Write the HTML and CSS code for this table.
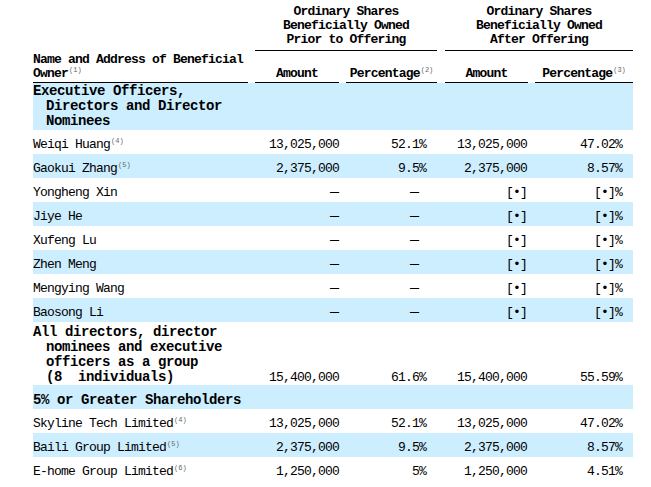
FILE: index.html
```html
<!DOCTYPE html>
<html>
<head>
<meta charset="utf-8">
<link rel="stylesheet" href="styles.css">
</head>
<body>
<div class="wrap">
<table class="own">
<colgroup>
<col class="c1"><col class="c2"><col class="c3"><col class="c4"><col class="c5">
</colgroup>
<thead>
<tr class="hr1">
<th></th>
<th colspan="2" class="pl7"><div class="ul u1">Ordinary Shares<br>Beneficially Owned<br>Prior to Offering</div></th>
<th colspan="2" class="pl8"><div class="ul u1">Ordinary Shares<br>Beneficially Owned<br>After Offering</div></th>
</tr>
<tr class="hr2">
<th class="left"><div class="ul u2">Name and Address of Beneficial Owner<sup>(1)</sup></div></th>
<th class="pl7"><div class="ul u2">Amount</div></th>
<th class="pl7"><div class="ul u2">Percentage<sup>(2)</sup></div></th>
<th class="pl8"><div class="ul u2">Amount</div></th>
<th class="pl7"><div class="ul u2">Percentage<sup>(3)</sup></div></th>
</tr>
</thead>
<tbody>
<tr class="sec b"><td class="hang">Executive Officers, Directors and Director Nominees</td><td></td><td></td><td></td><td></td></tr>
<tr class="row"><td>Weiqi Huang<sup>(4)</sup></td><td class="amt">13,025,000</td><td class="pct">52.1%</td><td class="amt2">13,025,000</td><td class="pct">47.02%</td></tr>
<tr class="row b"><td>Gaokui Zhang<sup>(5)</sup></td><td class="amt">2,375,000</td><td class="pct">9.5%</td><td class="amt2">2,375,000</td><td class="pct">8.57%</td></tr>
<tr class="row"><td>Yongheng Xin</td><td class="amt"><span class="dash">—</span></td><td class="pct dpct"><span class="dash">—</span></td><td class="amt2">[•]</td><td class="pct">[•]%</td></tr>
<tr class="row b"><td>Jiye He</td><td class="amt"><span class="dash">—</span></td><td class="pct dpct"><span class="dash">—</span></td><td class="amt2">[•]</td><td class="pct">[•]%</td></tr>
<tr class="row"><td>Xufeng Lu</td><td class="amt"><span class="dash">—</span></td><td class="pct dpct"><span class="dash">—</span></td><td class="amt2">[•]</td><td class="pct">[•]%</td></tr>
<tr class="row b"><td>Zhen Meng</td><td class="amt"><span class="dash">—</span></td><td class="pct dpct"><span class="dash">—</span></td><td class="amt2">[•]</td><td class="pct">[•]%</td></tr>
<tr class="row"><td>Mengying Wang</td><td class="amt"><span class="dash">—</span></td><td class="pct dpct"><span class="dash">—</span></td><td class="amt2">[•]</td><td class="pct">[•]%</td></tr>
<tr class="row b"><td>Baosong Li</td><td class="amt"><span class="dash">—</span></td><td class="pct dpct"><span class="dash">—</span></td><td class="amt2">[•]</td><td class="pct">[•]%</td></tr>
<tr class="grp"><td class="hang">All directors, director nominees and executive officers as a group (8&nbsp;&nbsp;individuals)</td><td class="amt">15,400,000</td><td class="pct">61.6%</td><td class="amt2">15,400,000</td><td class="pct">55.59%</td></tr>
<tr class="row sec1 b"><td>5% or Greater Shareholders</td><td></td><td></td><td></td><td></td></tr>
<tr class="row"><td>Skyline Tech Limited<sup>(4)</sup></td><td class="amt">13,025,000</td><td class="pct">52.1%</td><td class="amt2">13,025,000</td><td class="pct">47.02%</td></tr>
<tr class="row b"><td>Baili Group Limited<sup>(5)</sup></td><td class="amt">2,375,000</td><td class="pct">9.5%</td><td class="amt2">2,375,000</td><td class="pct">8.57%</td></tr>
<tr class="row"><td>E-home Group Limited<sup>(6)</sup></td><td class="amt">1,250,000</td><td class="pct">5%</td><td class="amt2">1,250,000</td><td class="pct">4.51%</td></tr>
</tbody>
</table>
</div>
</body>
</html>
```
FILE: styles.css
```css
html, body {
  margin: 0;
  padding: 0;
  background: #fff;
}
.wrap {
  padding: 5px 0 0 33px;
}
.own {
  width: 600px;
  table-layout: fixed;
  border-collapse: collapse;
  border-spacing: 0;
  font-family: "Liberation Mono", "DejaVu Sans Mono", monospace;
  font-size: 13px;
  letter-spacing: -0.8px;
  color: #000;
}
.c1 { width: 215px; }
.c2 { width: 91px; }
.c3 { width: 98px; }
.c4 { width: 91px; }
.c5 { width: 105px; }
.own th, .own td {
  padding: 0;
}
.own th {
  font-weight: bold;
  text-align: center;
  vertical-align: bottom;
}
.own th.left {
  text-align: left;
}
.pl7 { padding-left: 7px !important; }
.pl8 { padding-left: 8px !important; }
.ul {
  border-bottom: 1px solid #000;
  line-height: 14px;
}
.u1 {
  padding-bottom: 3px;
}
.hr2 th {
  padding-top: 2px;
}
.u2 {
  padding-bottom: 1px;
}
sup {
  font-size: 7px;
  line-height: 0;
  vertical-align: 5px;
  letter-spacing: 0;
  color: #666;
  font-weight: normal;
  margin-left: 1px;
}
.b td {
  background: #cceeff;
}
.own td:nth-child(2), .own td:nth-child(3), .own td:nth-child(5) {
  padding-left: 7px;
}
.own td:nth-child(4) {
  padding-left: 8px;
}
.row td {
  height: 18px;
  padding-top: 6px;
  line-height: 18px;
  vertical-align: top;
  white-space: nowrap;
}
.amt { text-align: right; }
.amt2 { text-align: right; padding-right: 1px !important; }
.pct { text-align: right; padding-right: 11px !important; }
.dpct { padding-right: 18px !important; }
.dash {
  font-size: 15px;
  letter-spacing: 0;
}
.sec td, .grp td {
  vertical-align: bottom;
  line-height: 15px;
}
.sec td {
  padding-top: 1px;
  padding-bottom: 1px;
}
.grp td {
  padding-top: 3px;
  padding-bottom: 0;
}
.hang {
  font-size: 14px;
  letter-spacing: -0.4px;
  font-weight: bold;
  padding-left: 13px !important;
  text-indent: -13px;
}
.sec1 td {
  font-size: 14px;
  letter-spacing: -0.4px;
  font-weight: bold;
}
```
